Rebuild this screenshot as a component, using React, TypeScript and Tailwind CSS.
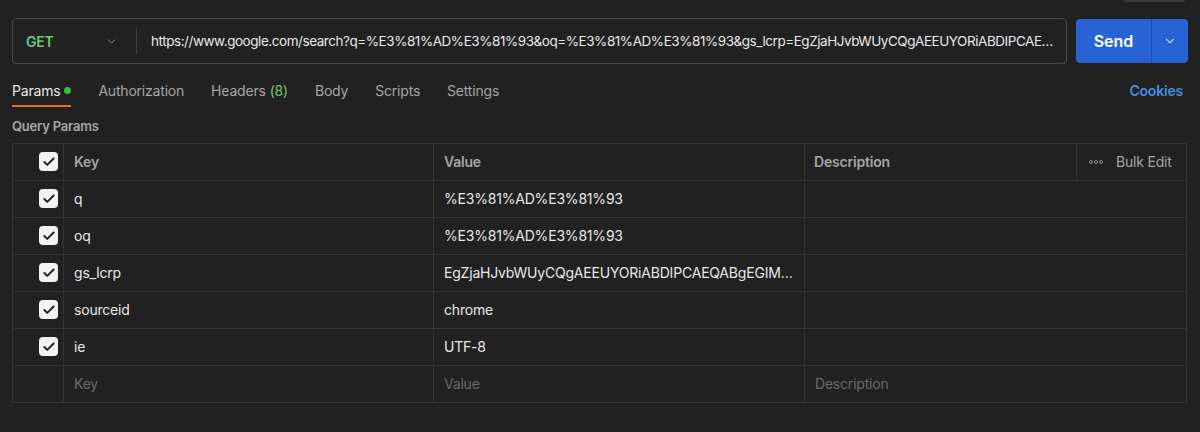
import { ChevronDown, Check } from "lucide-react";

const url =
  "https://www.google.com/search?q=%E3%81%AD%E3%81%93&oq=%E3%81%AD%E3%81%93&gs_lcrp=EgZjaHJvbWUyCQgAEEUYORiABDIPCAEQABgEGIMBGLEDGIAEMgcIAhAAGIAEMgcIAxAAGIAEMgcIBBAAGIAE&sourceid=chrome&ie=UTF-8";

const params = [
  { key: "q", value: "%E3%81%AD%E3%81%93" },
  { key: "oq", value: "%E3%81%AD%E3%81%93" },
  { key: "gs_lcrp", value: "EgZjaHJvbWUyCQgAEEUYORiABDIPCAEQABgEGIMBGLEDGIAEMgcIAhAAGIAE" },
  { key: "sourceid", value: "chrome" },
  { key: "ie", value: "UTF-8" },
];

const tabs = [
  { label: "Params", dot: true, active: true },
  { label: "Authorization" },
  { label: "Headers", count: "(8)" },
  { label: "Body" },
  { label: "Scripts" },
  { label: "Settings" },
];

function Checkbox() {
  return (
    <span className="flex h-[19px] w-[19px] items-center justify-center rounded-[4px] bg-[#f2f2f2]">
      <Check className="h-[14px] w-[14px] text-[#1c1c1c]" strokeWidth={3.2} />
    </span>
  );
}

export default function App() {
  return (
    <div
      className="relative h-[432px] w-[1200px] overflow-hidden bg-[#212121] text-[14px] tracking-[-0.2px] text-[#e8e8e8]"
      style={{ fontFamily: "Inter, 'Liberation Sans', sans-serif" }}
    >
      <div className="absolute right-[15px] top-0 h-[2px] w-[61px] rounded-b bg-[#3a3a3a]" />

      <div className="flex items-center gap-[9px] px-[12px] pt-[18px]">
        <div className="flex h-[46px] min-w-0 flex-1 items-center rounded-[4px] border border-[#4a4a4a]">
          <div className="flex w-[123px] shrink-0 items-center justify-between pl-[13px] pr-[18px]">
            <span className="text-[14px] font-semibold text-[#6bc97a]">GET</span>
            <ChevronDown className="h-[13px] w-[13px] text-[#9a9a9a]" strokeWidth={1.6} />
          </div>
          <div className="h-[26px] w-px bg-[#3d3d3d]" />
          <div className="min-w-0 flex-1 truncate pl-[14px] pr-[10px] text-[13.5px] tracking-[-0.45px] text-[#e8e8e8]">
            {url}
          </div>
        </div>
        <div className="flex h-[44px] w-[112px] shrink-0 overflow-hidden rounded-[4px] bg-[#2863d6]">
          <div className="flex w-[75px] items-center justify-center text-[16px] font-semibold tracking-normal text-white">
            Send
          </div>
          <div className="w-px bg-[#1f4fb0]" />
          <div className="flex flex-1 items-center justify-center">
            <ChevronDown className="h-[14px] w-[14px] text-white" strokeWidth={1.8} />
          </div>
        </div>
      </div>

      <div className="mt-[11px] flex items-start justify-between px-[12px]">
        <div className="flex gap-[27px]">
          {tabs.map((t) => (
            <div key={t.label} className="flex flex-col">
              <div
                className={`flex h-[30px] items-center gap-[4px] text-[14px] ${t.active ? "text-[#e8e8e8]" : "text-[#a6a6a6]"}`}
              >
                <span>{t.label}</span>
                {t.dot ? <span className="h-[7px] w-[7px] rounded-full bg-[#3fb950]" /> : null}
                {t.count ? <span className="text-[#6bc97a]">{t.count}</span> : null}
              </div>
              <div className={`h-[2px] ${t.active ? "bg-[#e0703a]" : "bg-transparent"}`} />
            </div>
          ))}
        </div>
        <div className="flex h-[30px] items-center pr-[5px] text-[14px] font-semibold text-[#4a8fe0]">Cookies</div>
      </div>

      <div className="mt-[10px] px-[12px] text-[13px] font-semibold text-[#a6a6a6]">Query Params</div>

      <div className="mx-[12px] mt-[6px] w-[1175px] border border-[#333333] text-[14px]">
        <div className="grid h-[37px] grid-cols-[51px_370px_371px_272px_1fr] border-b border-[#333333] font-semibold text-[#a6a6a6]">
          <div className="flex items-center justify-end border-r border-[#333333] pr-[5px]">
            <Checkbox />
          </div>
          <div className="flex items-center border-r border-[#333333] pl-[10px]">Key</div>
          <div className="flex items-center border-r border-[#333333] pl-[10px]">Value</div>
          <div className="flex items-center border-r border-[#333333] pl-[9px]">Description</div>
          <div className="flex items-center gap-[13px] pl-[12px] font-normal">
            <span className="flex gap-[1px]">
              <span className="h-[4px] w-[4px] rounded-full border border-[#8a8a8a]" />
              <span className="h-[4px] w-[4px] rounded-full border border-[#8a8a8a]" />
              <span className="h-[4px] w-[4px] rounded-full border border-[#8a8a8a]" />
            </span>
            <span className="text-[#a6a6a6]">Bulk Edit</span>
          </div>
        </div>
        {params.map((p) => (
          <div key={p.key} className="grid h-[37px] grid-cols-[51px_370px_371px_1fr] border-b border-[#333333]">
            <div className="flex items-center justify-end border-r border-[#333333] pr-[5px]">
              <Checkbox />
            </div>
            <div className="flex items-center border-r border-[#333333] pl-[10px]">{p.key}</div>
            <div className="flex min-w-0 items-center border-r border-[#333333] pl-[10px] pr-[10px]">
              <span className="truncate">{p.value}</span>
            </div>
            <div />
          </div>
        ))}
        <div className="grid h-[36px] grid-cols-[51px_370px_371px_1fr] text-[#6a6a6a]">
          <div className="border-r border-[#333333]" />
          <div className="flex items-center border-r border-[#333333] pl-[10px]">Key</div>
          <div className="flex items-center border-r border-[#333333] pl-[10px]">Value</div>
          <div className="flex items-center pl-[10px]">Description</div>
        </div>
      </div>
    </div>
  );
}
